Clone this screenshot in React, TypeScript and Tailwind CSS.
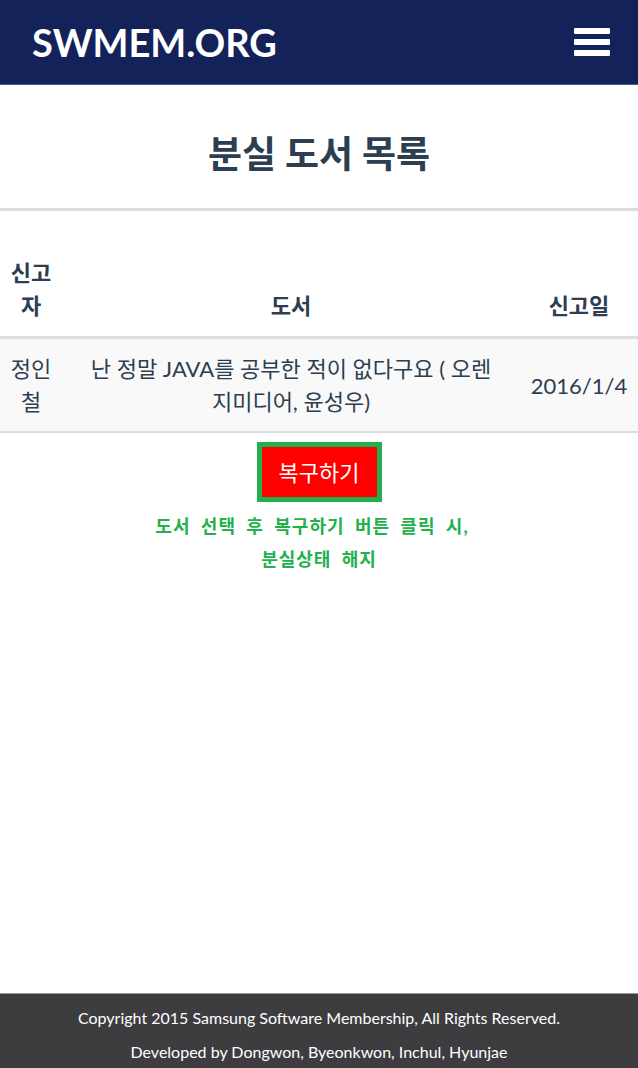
export default function App() {
  return (
    <div
      className="min-h-[1068px] flex flex-col bg-white text-[#2c3e50]"
      style={{ fontFamily: 'Lato, "Noto Sans CJK KR", sans-serif' }}
    >
      <header className="h-[85px] bg-[#13235a] border-b border-[#4b5a86] flex items-center justify-between pl-[32px] pr-[28px]">
        <span className="text-white font-bold text-[38px] leading-none">SWMEM.ORG</span>
        <button className="flex flex-col gap-[5px]" aria-label="menu">
          <span className="block w-[36px] h-[6px] bg-white rounded-[1px]" />
          <span className="block w-[36px] h-[6px] bg-white rounded-[1px]" />
          <span className="block w-[36px] h-[6px] bg-white rounded-[1px]" />
        </button>
      </header>

      <main className="flex-1">
        <h1 className="text-center font-bold text-[37px] leading-[40px] pt-[49px] pb-[34px]">분실 도서 목록</h1>
        <hr className="border-0 h-[3px] bg-[#dddddd]" />

        <table className="w-full mt-[31px] border-collapse text-[22px] leading-[33px]">
          <thead>
            <tr className="border-b-[3px] border-[#dddddd]">
              <th className="w-[62px] px-[8px] pt-[14px] pb-[14px] align-bottom font-bold">신고자</th>
              <th className="px-[8px] pb-[14px] align-bottom font-bold">도서</th>
              <th className="w-[118px] px-[8px] pb-[14px] align-bottom font-bold">신고일</th>
            </tr>
          </thead>
          <tbody>
            <tr className="bg-[#f9f9f9] border-b-2 border-[#dddddd]">
              <td className="px-[8px] py-[13px] text-center align-middle">정인철</td>
              <td className="px-[20px] py-[13px] text-center align-middle">
                난 정말 JAVA를 공부한 적이 없다구요 ( 오렌지미디어, 윤성우)
              </td>
              <td className="px-[8px] py-[13px] text-center align-middle">2016/1/4</td>
            </tr>
          </tbody>
        </table>

        <div className="flex flex-col items-center pt-[9px]">
          <button className="w-[125px] h-[60px] border-[5px] border-[#22b14c] bg-[#ff0000] text-white text-[22px] flex items-center justify-center">
            복구하기
          </button>
          <p className="mt-[8px] text-center text-[#22b14c] font-bold text-[18px] leading-[33px] tracking-[1px] [word-spacing:5px]">
            <span className="pr-[14px]">도서 선택 후 복구하기 버튼 클릭 시,</span>
            <br />
            분실상태 해지
          </p>
        </div>
      </main>

      <footer className="h-[75px] overflow-hidden bg-[#3d3d3f] border-t border-[#9a9a9a] flex flex-col items-center pt-[7px] text-white text-[16px] leading-[34px]">
        <p>Copyright 2015 Samsung Software Membership, All Rights Reserved.</p>
        <p>Developed by Dongwon, Byeonkwon, Inchul, Hyunjae</p>
      </footer>
    </div>
  );
}
